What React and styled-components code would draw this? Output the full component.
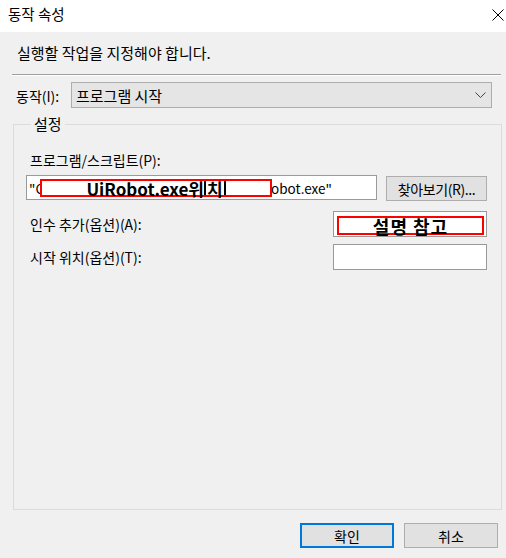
import React from "react";
import styled, { createGlobalStyle } from "styled-components";

const GlobalStyle = createGlobalStyle`
  html, body {
    margin: 0;
    padding: 0;
    background: #f0f0f0;
  }
  body {
    font-family: "Noto Sans CJK KR", "Noto Sans", sans-serif;
    color: #000;
  }
`;

const Dialog = styled.div`
  width: 506px;
  height: 558px;
  display: flex;
  flex-direction: column;
  background: #f0f0f0;
  overflow: hidden;
`;

const TitleBar = styled.div`
  height: 32px;
  flex: 0 0 32px;
  background: #fff;
  display: flex;
  align-items: center;
  justify-content: space-between;
  padding: 0 2px 0 8px;
  box-sizing: border-box;
`;

const Title = styled.span`
  font-size: 14.5px;
  line-height: 20px;
  margin-top: -4px;
`;

const CloseIcon = styled.svg`
  width: 12px;
  height: 12px;
  margin-top: -3px;
`;

const Body = styled.div`
  flex: 1;
  display: flex;
  flex-direction: column;
  padding: 0 4px 0 12px;
  min-height: 0;
`;

const Instruction = styled.div`
  margin-top: 11px;
  padding-left: 5px;
  font-size: 15px;
  line-height: 20px;
`;

const Separator = styled.div`
  margin: 11px 1px 0 0;
  border-top: 1px solid #a0a0a0;
  border-bottom: 1px solid #fff;
`;

const ActionRow = styled.div`
  margin-top: 6px;
  display: flex;
  align-items: center;
  padding-right: 10px;
`;

const ActionLabel = styled.label`
  width: 59px;
  padding-left: 4px;
  box-sizing: border-box;
  font-size: 14px;
  line-height: 20px;
  margin-top: 2px;
`;

const Select = styled.div`
  flex: 1;
  height: 26px;
  box-sizing: border-box;
  border: 1px solid #adadad;
  background: #e5e5e5;
  display: flex;
  align-items: center;
  justify-content: space-between;
  padding: 0 4px 0 4px;
  font-size: 15px;
`;

const Chevron = styled.svg`
  width: 11px;
  height: 6px;
  margin-right: 1px;
`;

const Group = styled.fieldset`
  flex: 1;
  margin: 7px 0 13px 1px;
  padding: 0 14px 0 12px;
  border: 1px solid #dcdcdc;
  min-width: 0;
  display: flex;
  flex-direction: column;
`;

const Legend = styled.legend`
  font-size: 15px;
  line-height: 18px;
  margin-left: 5px;
  padding: 0 3px 0 3px;
`;

const FieldLabel = styled.label`
  font-size: 14px;
  line-height: 20px;
  padding-left: 4px;
`;

const ProgramLabel = styled(FieldLabel)`
  margin-top: 17px;
`;

const Row = styled.div`
  display: flex;
  align-items: ${(p) => p.$align || "center"};
  justify-content: space-between;
  margin-top: ${(p) => p.$top}px;
`;

const TextBox = styled.div`
  position: relative;
  box-sizing: border-box;
  width: ${(p) => p.$width}px;
  height: ${(p) => p.$height || 25}px;
  background: #fff;
  border: 1px solid #9a9a9a;
  display: flex;
  align-items: center;
  padding-left: 2px;
  font-size: 13.5px;
  white-space: nowrap;
  overflow: hidden;
`;

const Spacer = styled.span`
  display: inline-block;
  flex: 0 0 ${(p) => p.$width}px;
`;

const Redact = styled.div`
  position: absolute;
  left: ${(p) => p.$left}px;
  top: ${(p) => p.$top}px;
  width: ${(p) => p.$width}px;
  height: ${(p) => p.$height}px;
  box-sizing: border-box;
  border: 2px solid #f00;
  background: #fff;
  display: flex;
  align-items: stretch;
  justify-content: center;
  font-weight: 700;
  font-size: ${(p) => p.$size}px;
  line-height: 1;
  letter-spacing: ${(p) => p.$spacing || 0}px;
`;

const RedactText = styled.span`
  display: flex;
  align-items: center;
`;

const Cursor = styled.span`
  display: flex;
  align-items: center;
  border-left: 2px solid #000;
  border-right: 2px solid #000;
  padding: 0 1px;
`;

const Button = styled.button`
  box-sizing: border-box;
  width: ${(p) => p.$width || 94}px;
  height: 25px;
  margin-top: ${(p) => p.$top || 0}px;
  background: #e1e1e1;
  border: ${(p) => (p.$primary ? "2px solid #0078d7" : "1px solid #adadad")};
  font-family: "Noto Sans CJK KR", "Noto Sans", sans-serif;
  font-size: 14px;
  color: #000;
  padding: 0;
  letter-spacing: ${(p) => p.$spacing || 0}px;
`;

const Footer = styled.div`
  display: flex;
  justify-content: flex-end;
  gap: 10px;
  padding: 0 4px 10px 0;
`;

export default function App() {
  return (
    <Dialog>
      <GlobalStyle />
      <TitleBar>
        <Title>동작 속성</Title>
        <CloseIcon viewBox="0 0 12 12">
          <path d="M0.5 0.5 L11.5 11.5 M11.5 0.5 L0.5 11.5" stroke="#000" strokeWidth="1" />
        </CloseIcon>
      </TitleBar>
      <Body>
        <Instruction>실행할 작업을 지정해야 합니다.</Instruction>
        <Separator />
        <ActionRow>
          <ActionLabel>동작(I):</ActionLabel>
          <Select>
            <span>프로그램 시작</span>
            <Chevron viewBox="0 0 11 6">
              <path d="M0.5 0.5 L5.5 5.5 L10.5 0.5" fill="none" stroke="#444" strokeWidth="1" />
            </Chevron>
          </Select>
        </ActionRow>
        <Group>
          <Legend>설정</Legend>
          <ProgramLabel>프로그램/스크립트(P):</ProgramLabel>
          <Row $top={5} $align="flex-start">
            <TextBox $width={351}>
              <span>"C</span>
              <Spacer $width={227} />
              <span>obot.exe"</span>
              <Redact $left={13} $top={3} $width={232} $height={18} $size={17}>
                <RedactText>UiRobot.exe위</RedactText>
                <Cursor>치</Cursor>
              </Redact>
            </TextBox>
            <Button $width={101} $top={1} $spacing={-0.4}>
              찾아보기(R)...
            </Button>
          </Row>
          <Row $top={10}>
            <FieldLabel>인수 추가(옵션)(A):</FieldLabel>
            <TextBox $width={154} $height={26}>
              <Redact $left={3} $top={4} $width={147} $height={19} $size={18} $spacing={1}>
                <RedactText>설명 참고</RedactText>
              </Redact>
            </TextBox>
          </Row>
          <Row $top={7}>
            <FieldLabel>시작 위치(옵션)(T):</FieldLabel>
            <TextBox $width={154} $height={26} />
          </Row>
        </Group>
        <Footer>
          <Button $primary>확인</Button>
          <Button>취소</Button>
        </Footer>
      </Body>
    </Dialog>
  );
}
